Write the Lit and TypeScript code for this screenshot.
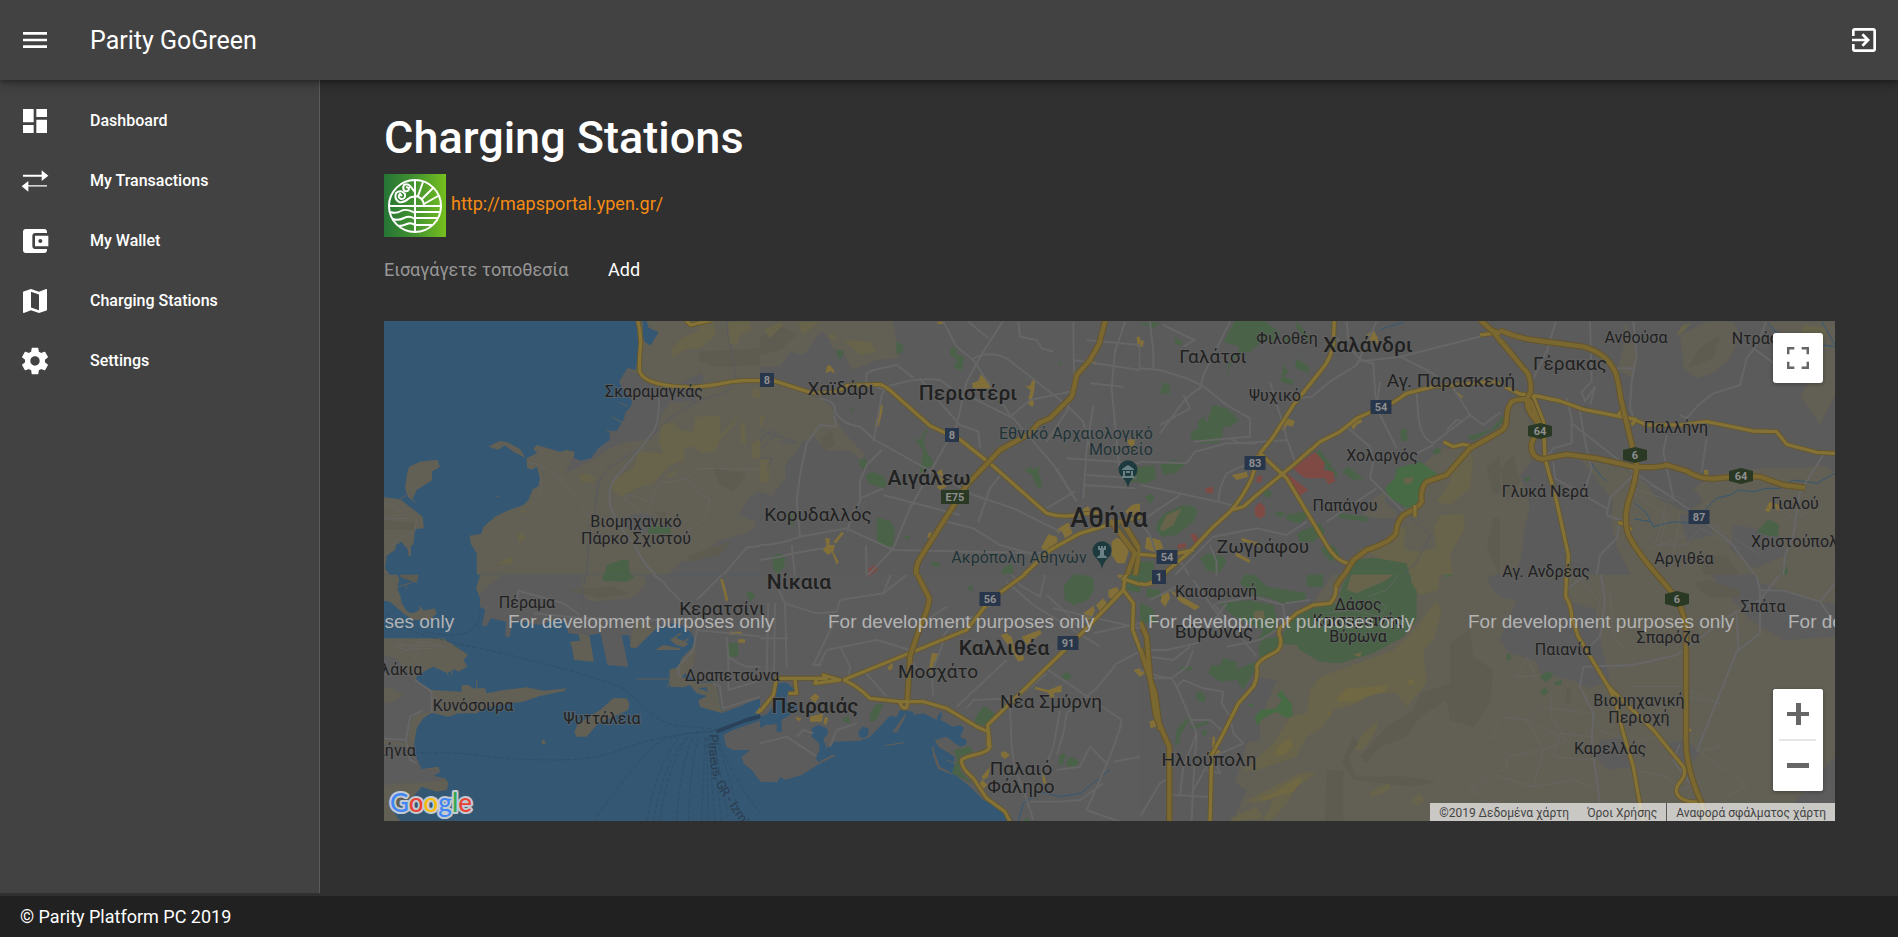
import { LitElement, html, svg, css } from "lit";
import { customElement, property } from "lit/decorators.js";

type Shape = [kind: string, d: string];

interface Sheet {
  x: number;
  y: number;
  areas: Shape[];
  lines: Shape[];
}

/* Map sheets. Every sheet has its own origin and is drawn at a third of its own units. */
const SHEETS: Sheet[] = [
  {
    x: 380,
    y: 315,
    areas: [
      ["land", "M0 0H1145V790H0Z"],
      ["urban", "M740 160L780 182L850 215L905 205L965 172L972 190L945 235L950 260L870 262L845 300L830 350L800 376L740 380L690 400L645 430L555 476L580 425L640 395Z"],
      ["urban", "M1145 525L1105 550L1075 600L1130 620L1110 650L1010 680L960 735L905 740L850 790H1145Z"],
      ["urban", "M720 610L780 595L815 600L820 650L760 655Z"],
      ["olive", "M1000 18L1008 60L960 100L910 105L880 130L872 105L905 70L950 50L965 18ZM1045 20L1110 18L1112 50L1080 60L1070 90L1045 85Z"],
      ["olive", "M845 330L880 322L900 345L940 350L945 305L1020 303L1022 360L1045 335L1075 298L1060 330L1020 375L1005 410L965 415L940 395L912 400L915 436L870 450L820 505L770 520L725 545L700 530L690 500L760 460L775 410L850 415L835 380ZM1120 215L1145 225V255L1115 245ZM1080 320L1096 330L1098 390L1085 385Z"],
      ["olive", "M595 485L615 475L648 485L640 502L605 500ZM410 660L430 652L438 668L418 685ZM350 748L390 725L405 735L390 748ZM420 585L445 585L425 597ZM860 480L893 462L890 475L865 490ZM1115 385L1145 370V430L1115 430Z"],
      ["shade", "M955 110L1145 100V150L1010 155L960 140ZM1000 460L1060 470L1100 475L1060 530L1020 510ZM930 720L1050 680L1020 720L920 740ZM820 590L860 590L850 615Z"],
      ["park", "M805 633L872 633V656H805ZM668 790L680 752L720 735L745 735L752 790Z"],
      ["water", "M0 0H768L775 90L768 165L742 159L718 200L724 215L757 258L752 275L735 295L733 310L712 345L688 352L690 375L655 400L633 430L600 437L583 430L583 410L560 405L540 410L470 390L460 402L472 414L440 430L441 458L456 464L470 455L480 490L474 515L458 522L445 556L430 570L380 588L345 605L310 636L304 656L268 662L274 690L290 715L291 790H0Z"],
      ["water", "M788 18H800L806 38L836 52L812 91L795 82L789 65Z"],
      ["land", "M75 520L82 470L88 455L120 440L172 434L180 455L155 470L157 495L110 525L98 552L113 570L84 545Z"],
      ["land", "M325 395L345 385L360 378L378 380L420 402L436 428L400 410L374 391L355 404Z"],
      ["land", "M0 545L60 553L128 605L132 640L105 642L100 690H93V722H85V706L65 680L48 690L45 705L20 722L15 760L30 780H0Z"],
      ["shade", "M12 615L105 625L100 645H12Z"],
    ],
    lines: [
      ["faint", "M1040 20L1045 70L1060 130L1066 200Q1040 240 990 245L940 265L865 312L820 360L770 408L690 455L655 500L645 590L628 650L620 790"],
      ["thin", "M442 440L485 452L540 490L585 545L630 605M470 545L485 520L480 470M730 560L740 540L770 545L810 562L835 505L875 500L920 490L955 460L1145 463M920 490L960 540L990 550L975 610L920 650M12 565L50 580L82 610L15 612M110 610L105 650L50 675L18 720M728 545L795 605L820 560"],
      ["local", "M837 250Q838 320 820 350Q760 430 705 490Q680 520 692 575Q715 640 765 690Q790 750 830 782M1030 780L1100 698L1140 692"],
      ["landline", "M60 553L80 540M695 305L725 322M718 262L745 275M680 345L700 352M350 544H358"],
      ["major", "M773 15Q786 60 780 110Q777 150 779 170Q790 196 835 206Q880 218 950 216Q1000 212 1055 200Q1090 195 1145 197M917 15L932 30L992 16"],
    ],
  },
  {
    x: 760,
    y: 315,
    areas: [
      ["land", "M0 0H395L407 60L415 130L350 135L275 165L250 110L215 100L205 65L185 50L165 70L150 95L140 110L125 120L90 110L60 155H0Z"],
      ["land", "M0 190L60 210L180 250L215 275L228 310L250 350L315 420L300 432L265 405L200 408L175 385L165 365L130 378L112 405L75 450L78 490L35 542L0 530Z"],
      ["shade", "M0 70L60 30L110 60L60 105L0 120ZM180 370L215 345L225 390L190 405Z"],
      ["olive", "M12 45L60 20L70 30L30 70ZM0 300L15 305L0 340ZM115 40L120 20H180L130 60ZM200 65L225 55L230 80ZM0 430L30 430L25 500L0 505ZM250 75L330 80L350 110L300 120Z"],
      ["park", "M228 115L235 103L252 107L248 125L238 132ZM408 80L430 92L428 112L410 116ZM570 105L578 96L592 100L588 120L613 127L605 165L585 160L580 150L592 140L585 128L570 122ZM890 145L900 138L903 150ZM265 282L283 284L273 291Z"],
      ["park", "M500 338L503 342L490 375L497 405L520 440L515 455L500 458L497 470L478 475L485 440L490 405L462 370L480 376ZM298 435L315 430L322 445L318 465L300 455ZM318 480L335 470L372 482L380 510L370 520L325 505ZM792 465L812 456L822 462L838 455L835 475L845 495V520L830 515L815 480ZM350 605L395 620L405 650L400 690L385 698L352 685L350 660ZM80 595L98 598L100 630L88 632ZM428 665L450 662L445 675ZM38 722L60 715L76 730L72 755L55 780L38 760ZM510 745L520 738L545 750L525 757ZM730 760L755 745L760 775L725 778ZM1105 460L1145 455V500L1110 500ZM1120 740H1145V785H1105Z"],
      ["plaza", "M197 175L200 155L208 149L222 165L223 176L212 168ZM358 272L368 268L367 290L355 335L345 332L352 300ZM636 205L655 198L662 178L672 188L690 200L692 220L640 224ZM797 215L812 210L815 197L826 196L822 230L816 252L822 262L818 275L806 270V248L812 225ZM530 20H550L548 27H535ZM990 135L1012 142L1008 150L990 142ZM1130 65L1140 65V95H1132Z"],
      ["plaza", "M525 475L545 462L552 495L560 515L540 525L530 515L545 505L538 490ZM505 655L515 650L512 670L502 668ZM195 670H210L208 690L225 690L220 710L236 740L230 750L216 712L205 720L188 705L200 690ZM220 682L245 650L252 655L228 685ZM845 695L865 658L890 665L893 680L862 706L845 703ZM888 645L925 622L938 655L915 670L905 648L893 655ZM965 585L985 573L992 590L975 597ZM1055 680L1070 668L1095 680L1110 695L1095 745H1072L1055 720ZM1095 590L1115 570L1140 565V600L1105 600ZM1100 375L1125 370L1120 420Z"],
      ["red", "M325 762L348 748L353 765L325 785Z"],
    ],
    lines: [
      ["faint", "M0 372L40 345L50 355L0 405M0 345L110 382L60 380M0 430L35 430L20 460M1110 60Q1060 130 1040 200L1050 300L1050 400M945 20L948 150M960 560L975 380"],
      ["local", "M180 250Q230 260 225 290Q250 330 300 335L345 375L560 495L640 540L760 580L900 650M340 380L350 330L365 240L380 215Q470 185 540 195L600 240L640 250L760 310L820 380L880 450L950 560M318 205L320 175L340 165L410 150L460 188M380 225L320 205M365 405L320 450L300 500L300 560L275 600L262 650"],
      ["local", "M0 690Q60 690 120 665L260 640L400 705L860 714M120 665L110 560L120 480L140 385L180 330L230 335L222 300M550 20L590 95L640 135L750 300M625 20L685 70M728 20L670 110L620 200L590 330L450 580L400 700L320 785M775 20L780 65L830 75L845 100L880 110M640 130Q690 105 740 130L830 200L920 270L970 320L990 400"],
      ["local", "M940 20L942 190L920 290L860 380M980 75L1140 90L1140 165L940 135M990 205L1090 215M1000 270L980 400L970 550M750 305L810 255L930 230M560 620L640 640L720 690L860 730M655 620L690 520L730 470M370 540L600 600M300 550L370 520M480 190L520 240L600 330L655 350L660 400M1095 20L1065 110L1055 220L1080 480M920 430L1140 445M980 480L1130 490M975 510L1125 520M890 460L950 560M860 580L945 530M95 690L105 780M318 690L320 780M0 735L60 725L100 715L190 700"],
      ["major", "M40 197L150 232Q230 240 260 212L360 208Q380 215 400 235L510 332L600 374L690 445L860 595Q910 610 960 598L1020 592M1145 605L1060 625L960 655L870 705L790 780"],
      ["trunk", "M1036 15L1018 85L990 135L950 180Q940 230 935 245L870 310L835 325L810 355L720 405L620 510L480 730Q462 760 472 790M1050 615L1125 715L1100 785M1085 615L1140 705L1125 785"],
    ],
  },
  {
    x: 1140,
    y: 315,
    areas: [
      ["land", "M1145 260L1100 310L1095 345L1040 375L980 400L900 400L850 450L865 490L850 540L790 580L770 610L700 610L670 600L690 560L735 525L735 560L770 590V630L720 690L660 700L640 735V790H1145Z"],
      ["olive", "M940 450L990 400L1000 440L990 520L930 570L890 560L930 500ZM900 600L970 598L975 640L930 720L940 790H820L700 720L680 705L760 680L770 640L800 635L790 700L830 710L890 700L880 640Z"],
      ["shade", "M1140 430L1080 420L1040 460L1060 540L1110 520L1140 560ZM1060 610L1145 620V790H1080L1040 690Z"],
      ["park", "M285 18H375L420 55L405 85L370 75L330 110L300 115L270 150L258 205L265 150L300 95L250 80ZM425 60L462 70L455 85L430 80ZM470 18L515 75L505 80L470 40ZM0 25L60 20L40 40ZM105 70L130 80L120 92L105 85ZM430 150L445 170L430 185L460 195L458 210L422 200ZM470 130L505 155L510 175L465 160ZM70 205L90 205L88 238L60 235Z"],
      ["park", "M212 285L218 270L260 280L297 315L270 335L250 335L245 375L220 385L185 385L150 370L155 350L175 338L172 320L190 308L203 322ZM0 455L45 450L48 490L20 505H0ZM60 450L100 435L140 445L105 475L70 480ZM15 545L35 535L45 550L30 565ZM50 625L75 595L130 570L165 575L172 590L160 620L110 660L65 665L48 645ZM370 520L395 530L390 550L370 540ZM402 595L420 588L435 595L425 608ZM440 600L490 590L510 600L480 625L440 615ZM520 415L540 405L595 480L580 485ZM605 470L625 455L670 490L640 495ZM780 345L800 340L803 375L785 380ZM875 410L895 398L905 405L890 420ZM980 365L1050 345L1088 305L1090 330L1030 360L1000 378Z"],
      ["park", "M180 730L205 715L250 725L260 740L235 775L200 765ZM470 655L540 625L555 650L520 680L480 680ZM540 700L580 690L600 720L570 740ZM590 595L680 605L685 620L600 610ZM0 740L40 738L45 780H0ZM640 735L700 728L800 745L810 790H620Z"],
      ["wood", "M735 520L765 490L770 460L840 440L890 475L880 495L850 510L840 565L800 580L745 545Z"],
      ["olive", "M60 640L80 600L125 580L100 630L65 650ZM790 490L820 485L815 505L795 508Z"],
      ["red", "M458 460L525 410L555 445L550 465L580 470L585 500L565 508L555 490L500 490L485 482ZM440 475L505 525L475 545ZM350 485L365 480L365 500L350 503ZM195 520L218 515L220 535L200 535ZM345 575L360 562L375 575V600L360 612L345 600ZM112 690L135 683L140 695L115 703ZM150 660L165 655L178 675L165 685Z"],
      ["plaza", "M440 310L465 318L458 335L440 330L435 347L425 345ZM630 325L660 308L668 320L650 330L640 345ZM680 60L700 45L712 65L715 85L690 85ZM275 480L320 470L325 485L290 495ZM0 75L12 78L8 95H0ZM20 665L60 675L70 700L40 710L15 700ZM305 668L370 688L360 695L305 678ZM290 712L330 735V745L285 722ZM930 215L970 245L965 250Z"],
    ],
    lines: [
      ["river", "M720 45L745 35L790 22"],
      ["local", "M70 30L130 60L165 75L130 95M270 20L195 170L180 215M0 160L60 165L140 190L185 210L260 270L330 310L330 365L270 370L160 380M0 440L140 445L165 410L260 385L350 385M60 355L130 260L150 240L185 215M130 240L150 280L60 330M30 20L40 110L40 160M0 510L235 560L290 575M235 560L240 520L260 475L380 420M390 200L420 300L440 370L465 440M440 375L300 385L270 370M480 250L515 245L570 200L650 150L710 20M650 140L780 125L1040 60M590 70L640 110Q660 140 700 145L706 240L720 300L770 400"],
      ["local", "M830 235L835 300Q840 370 880 385L990 300L940 220M880 390L830 415M780 125L860 165L900 190M720 200L710 280M620 335L690 395L700 440L690 490L790 590M440 660L350 640L220 665L100 785M0 625L30 660L50 720M500 620L440 660M560 620L710 520M120 540L0 620M210 690L230 740L230 785M110 720L150 785M990 300L1030 330L1110 270L1115 220M920 345L950 315L970 320M620 20L625 80"],
      ["faint", "M0 50L30 20M790 590L870 660L830 740L790 780M460 150L500 80"],
      ["major", "M583 15L580 85Q575 130 540 170L460 270L400 365L360 415L440 490L500 590L560 690Q590 740 625 745M1060 200L880 215L800 235L760 262L650 310L600 350L540 380L460 450L350 540L310 575L275 585M1060 200L1145 235M910 380L940 395L970 388L1000 395M1020 60L1060 55M0 718L50 722M355 420L335 490Q310 545 270 590L215 640L150 710L60 785M110 716L160 705"],
      ["trunk", "M1145 250Q1105 250 1100 290Q1110 330 1080 350L990 400L920 480L860 500Q840 520 845 560Q835 580 790 600Q770 620 768 655Q755 680 680 705L640 735L610 785M1020 15L1060 50L1145 160M1050 45L1100 60L1145 65"],
      ["major", "M825 570L825 605"],
    ],
  },
  {
    x: 1500,
    y: 315,
    areas: [
      ["land", "M15 290L60 262L90 320L95 440L60 480L90 570L75 640L60 740L40 790H0V330Z"],
      ["land", "M240 430L290 440L345 455L405 470L430 500L480 555L560 590L610 560L580 520L640 480L780 460L900 460L960 450L1005 470V790H400L350 700L330 620L340 560L280 480Z"],
      ["land", "M540 60L620 20H700L720 60L690 130L640 175L590 190L550 160ZM375 20L415 120L400 190L350 165L370 100ZM780 20H1005V240L960 330L900 240L930 200L860 60Z"],
      ["urban", "M700 630L830 650L860 720L760 760L690 700ZM540 600L620 590L640 660L560 680Z"],
      ["urban", "M110 480L330 600L350 690L300 760L210 740L170 600Z"],
      ["shade", "M0 460L40 420L60 500L20 560ZM600 100L660 60L640 130L560 160ZM600 730L680 720L720 780H610Z"],
      ["olive", "M530 60L545 30L575 25L540 60ZM910 30L980 40L970 90L900 70Z"],
      ["park", "M72 490L88 484L90 498L78 500ZM770 650L805 612L838 630L832 665L800 660ZM0 305L10 305L8 325L0 325ZM848 757H863V785H848Z"],
      ["plaza", "M795 588L808 560L838 570L835 590L820 570L808 590ZM360 285L375 290L370 305L355 300ZM612 465L625 465V485H612Z"],
    ],
    lines: [
      ["river", "M615 585L650 550L690 540L715 525L760 530L800 520L840 520L880 495L950 505L1005 475M965 20L1005 90M800 20L850 75L1005 95M405 565L440 595L460 635L520 620L580 625M405 612L450 620M270 440L300 480L320 500"],
      ["thin", "M420 500L520 540L560 560M390 530L500 600L480 700M430 650L470 690L560 690L600 640L720 700M450 700L560 660M500 560L470 680M540 600L520 720M830 580L880 610L930 590M520 560L400 520M640 630L780 720"],
      ["faint", "M0 200L40 260M760 90L830 140M870 80L850 150"],
      ["local", "M167 20L140 110L100 190M200 250L215 310L215 385L160 400L130 440M215 325L400 470L570 585L690 680L765 780M270 20L275 200L245 230L255 260L285 215L270 270M410 120L400 20M410 120L395 200L390 280L405 320M350 160H405M240 290L255 380L275 460L250 540M500 360L490 410L520 550M540 300L560 310L600 265L640 235L720 210L740 130L770 90L800 20M620 370L605 470M400 480L330 550L320 600L360 615L350 670L300 720L290 780M970 420L900 530L880 660L855 720L850 780M160 440L165 490L320 580M760 100L870 180"],
      ["major", "M15 215L60 237L110 243L180 258L250 283L400 312L440 330L540 330L620 320L680 332L760 348L830 350L860 388L950 412L1005 415M100 245L130 320L135 430L170 560L205 720L203 790M355 622L375 628L395 645M355 300L370 280M395 330L410 310"],
      ["trunk", "M0 45Q40 65 100 75L250 95Q320 115 345 170Q355 195 362 250L410 450Q410 490 385 560Q370 620 385 660Q410 710 480 790M0 75L70 160Q95 180 92 230Q70 265 95 300L118 330L95 385Q90 430 130 432L200 418L290 430L400 455Q470 460 500 450L560 468Q600 495 650 490L720 483L780 485L850 510L915 518M120 330L92 260Q70 245 35 260Q20 280 20 310Q20 340 0 350"],
    ],
  },
  {
    x: 380,
    y: 570,
    areas: [
      ["water", "M0 -5H1145V790H0Z"],
      ["land", "M296 -5L302 10L288 55L303 90L360 100L560 105L740 95L800 60L870 70L850 -5Z"],
      ["urban", "M420 -5H620L600 60L630 95L760 85L800 40L780 -5H1145V430L1025 430L1008 340L1000 330L960 340L900 300L945 230L935 190L900 175H870L838 165L800 200L768 235L752 232L748 196L725 196L745 290L682 285L662 190L628 196L565 190L560 160L540 145L480 165L400 150L388 202L376 198L378 155L333 145L318 170L306 165L316 120L300 110V70L360 20Z"],
      ["land", "M570 215L600 212L595 190L628 196L642 275L582 270L578 240ZM768 235L750 230L765 150L810 160L830 175Z"],
      ["land", "M870 350L868 300L895 290L915 240L825 240L850 225L900 235L870 210L905 185L938 195L950 220L940 290L905 320L960 340L1005 335L1010 350L1025 430L960 410L955 390L982 378L950 370L930 345L910 352Z"],
      ["water", "M938 195L912 212L925 222L910 232L890 225L910 250L880 255L900 270L935 235L946 215ZM870 160L905 165L935 190L920 215L888 205L905 190L875 182ZM955 355L985 365L978 352ZM1025 430L1090 405L1110 395L1145 385V440H1030Z"],
      ["land", "M0 -5H40L58 25L52 55L62 80L65 100L82 125L100 130L118 120L120 105L130 122L165 115L170 130L150 150L100 150L70 130L30 95L0 90Z"],
      ["land", "M0 205H190L265 255L250 270L262 290L235 305L225 298L200 308L160 290L140 300L110 318L108 335L155 360L245 365V345H265L280 355H315L320 370L370 360L440 352L490 362L560 355L555 362L480 378L430 395L360 405L310 415L290 430L235 430L205 440L155 428L130 445L110 475L100 540L105 565L125 597L175 590L180 605L160 618L195 625L206 640L200 660L170 665L125 650L100 680L40 725L60 752V790H0Z"],
      ["urban", "M0 255L50 265L110 335L155 365V425L105 435L90 460L85 520L0 510V400L40 395L70 375L30 350L0 360ZM0 520L95 530L125 597L175 600L160 618L195 630L120 640L40 640L0 650Z"],
      ["land", "M583 485L595 460L660 420L700 385H740L748 400L745 420L690 445L655 460L620 500H590ZM483 515L490 508L498 518L490 525Z"],
      ["park", "M668 -5H750L762 20L740 35L668 32ZM1045 220H1074V260H1045ZM1098 70L1115 62L1125 80L1110 95Z"],
      ["shade", "M560 60L700 50L750 70L660 85ZM60 0L120 0L110 40L60 20Z"],
      ["plaza", "M1020 25L1030 30L1045 90L1038 95ZM1048 185H1085V195H1048ZM1075 208H1095V218H1075ZM1125 430L1145 405V432Z"],
      ["urban", "M1030 495L1060 480L1145 450V640L1115 600L1090 580L1085 560L1110 540L1060 540L1040 530Z"],
    ],
    lines: [
      ["landline", "M770 327H870L862 352M880 330L870 345M290 330V355M205 318L200 300M215 315V300M55 50L95 38M78 45V55"],
      ["thin", "M40 230L80 240L120 215L180 225L200 240M60 250L100 235L160 235M100 270L130 215M50 225L190 228M60 215L70 240"],
      ["local", "M790 -5L850 35L860 50L900 90L950 140L950 180L1145 200M1050 -10L950 90M460 130L610 145L840 150L930 145M950 180L940 240L895 290V315L905 320M410 100L415 62L550 100L600 135M1040 200L1045 260L1075 280L1100 290L1145 290M1045 260V360L1145 330M1000 340L1020 350L1028 415L1110 390L1140 380M130 420L90 440L78 510L90 570L110 580M155 365V430M105 330L155 365M10 505L80 510"],
      ["faint", "M618 -5L605 110"],
      ["ferry", "M20 130Q60 175 130 195L250 225Q500 275 715 348Q760 375 790 410Q840 460 900 468L1010 478M300 120Q300 200 200 195L130 185M100 550Q250 545 310 558Q400 570 520 570Q640 570 720 540Q850 490 1010 482M640 755Q730 620 830 520Q880 490 1010 484M800 755Q830 580 900 500M820 755Q850 580 920 500M840 755Q860 590 925 500M890 755Q900 590 940 500M925 755Q930 600 955 500M965 755L975 500M985 755L980 500M1005 755L985 500M1025 755L995 500M1045 740L1000 500M1080 755Q1060 650 1005 495M1145 735Q1050 620 1010 490"],
      ["shipping", "M1010 485L1060 465L1100 450L1145 438"],
    ],
  },
  {
    x: 760,
    y: 570,
    areas: [
      ["urban", "M0 -5H1145V790H0Z"],
      ["water", "M0 635L50 637L62 620L75 630L125 615L190 575L230 555L215 555L175 577L165 560L178 545V520L155 500V475L175 465L200 475L205 490L190 508L200 535L225 515L300 512L330 500L390 438L410 440L420 420L460 425L460 435L490 430L530 450L538 428H546L542 450L580 470L600 465L612 475L600 500L620 510L618 525L600 530L560 500L525 510L535 530L585 560L580 610L630 650L670 690L740 725L765 760V790H0Z"],
      ["water", "M60 338H80L105 360L80 375V395L110 405L115 420L80 440L65 450V485H50V462L20 465V435L45 400L50 340ZM295 485L308 470L325 475L325 495L310 505L297 500ZM0 440L30 430L50 445L0 475Z"],
      ["park", "M910 50L935 20L945 -5H970L975 15L1000 25L1003 60L985 90L940 105L915 90ZM330 430L345 405L370 400L350 450L330 455ZM645 445L670 408L705 430L680 470L645 460ZM582 540L630 528L640 545L600 560L600 600L635 640L575 610L592 570ZM905 320L920 305L937 318L920 333ZM895 580L900 555L912 548L917 555L905 590ZM920 570L935 558L957 575L945 592L920 588ZM250 445L265 438L272 460L250 455ZM625 52L638 45V60L625 62ZM790 755L800 742L815 755ZM1100 -5L1145 20V70L1100 60Z"],
      ["plaza", "M972 128L1000 108L1005 122L990 150L970 140ZM1008 105L1030 85L1040 100L1020 125ZM1045 60L1070 50L1080 65L1060 90L1045 80ZM1068 -5H1105V15L1075 25ZM382 292L398 278L398 295L388 303ZM515 250H538L530 270L520 280V310L505 305ZM150 385L165 370L178 380L165 400ZM150 440L190 430L185 455L150 455ZM195 440L205 445L198 465L190 460ZM105 440L125 445L115 455ZM825 350L865 360L905 345L905 365L880 370L885 385L865 380V368L825 358ZM740 190L755 200L765 240L790 255L792 270L775 275L750 235L722 195ZM785 200L840 180L845 190L800 225ZM722 548L735 543L750 555L735 567L725 560ZM665 620L690 590L685 620L670 630ZM655 645L668 630L682 645L670 658ZM845 610L852 612L860 640L850 640ZM1120 300L1140 295V320Z"],
      ["red", "M325 -5H350L345 5L325 22Z"],
      ["urban", "M398 485L440 425L432 450L410 488ZM515 525L520 555L535 595L575 612L560 600L540 590L525 550Z"],
    ],
    lines: [
      ["landline", "M375 527L430 518M520 530L522 560L535 595L575 612M525 512L585 560L585 580L560 570"],
      ["river", "M765 790L790 700L840 665L900 680L960 670L1050 600"],
      ["faint", "M55 270L160 262M460 130L720 30M270 200L330 180L390 185"],
      ["local", "M25 -5L75 100L170 130L230 125L240 90L370 70L440 15M75 100L80 290M25 100L20 310M45 100L42 310M0 205L85 205M370 70L400 -5M230 140L160 285H185M175 290L200 240L350 210L450 240M265 330L270 290L240 230M310 300L380 380M470 300L440 240M520 380L515 310L545 230L555 190L590 150L640 140L700 100M590 410L740 270M740 -5L780 45L840 80L860 -5M740 35L820 105L1020 230M620 415L640 390L770 385L860 310M860 75L920 130L960 180"],
      ["local", "M880 115L1140 175M1140 245L1070 280L1010 355L920 430L910 490L890 555M850 290L1085 450L1080 470M900 420L880 530L845 620M750 410L755 530L765 600L790 660L820 750M1085 460L1050 560L980 720L1080 755M890 600L960 590L990 530L1040 580M810 695H900L960 690L1030 640M0 520L80 500L110 520L170 560M110 500L130 480L160 490M1140 560L1060 575M210 530L230 480L290 460M1140 160L1000 190M560 110L500 150"],
      ["major", "M0 425L40 375L50 325L200 325L190 315L240 330L165 340L170 325M105 330L110 370H85M250 330L620 180L690 90L820 -5M250 330Q290 345 330 385L420 395L490 395L560 415L650 470L685 485V530M420 395Q425 420 440 412L445 390M765 785L735 725L680 685L640 625Q600 590 605 570Q615 560 650 553Q685 545 690 530L683 465L960 195L1090 60L1095 20L1115 -5M1090 60L1120 100L1118 180L1145 250M1085 25L1145 45"],
      ["trunk", "M470 -5L475 20L508 85Q505 120 480 170L450 260L442 390"],
    ],
  },
  {
    x: 1140,
    y: 570,
    areas: [
      ["land", "M590 -5H1145V790H260L320 660L285 640L320 520L360 510V450L410 330L350 320L360 270L430 225L470 150L520 95Z"],
      ["park", "M240 100L330 90L400 105L412 150L400 190L350 220L370 180L300 150L270 130ZM300 40L320 5L345 15L380 50L440 60L500 70L490 95L430 100L390 85L340 75ZM500 -5H550V50H500ZM0 -5H60L50 40H0ZM0 95L40 120L50 160H0ZM355 235L365 210L430 195V225L400 250L360 265ZM205 310L215 285H240L250 265L290 275V300L345 275L345 300L310 360L290 330L240 335ZM120 290L158 290L155 300H118ZM170 370L185 362L197 385L190 398L170 390ZM105 530L110 480L140 445L148 450L120 495L118 520ZM150 470L205 452V460L155 480ZM185 485L195 478L202 490L192 502ZM20 55L60 60L65 85L20 80Z"],
      ["park", "M640 -5H800L830 40L830 150L790 200L700 250L600 280L540 275L480 240L470 225L430 222V190L450 150L490 120L590 100L610 40Z"],
      ["wood", "M345 440L360 420L410 415L425 390L410 375L425 360L440 385L455 400L460 445L430 440L410 425L370 445L350 468ZM320 405L340 400L338 410ZM910 10L920 5L940 15L920 22ZM1100 255H1112V268H1100Z"],
      ["olive", "M640 -5H780L740 30L650 70L620 60ZM340 125L370 120L375 145L345 150ZM810 -5H900L895 60L840 75L815 40ZM890 90L905 130L880 210L850 240L860 340L800 410L770 370L700 370L640 405L580 420L550 470L500 500L470 560L350 600L310 600L400 520L450 440L500 430L510 360L540 320L640 285L760 240L830 170L860 130Z"],
      ["olive", "M715 450L710 480L670 540H640L670 490ZM320 690L400 650L480 610L530 605L490 640L390 690L340 700ZM270 745L350 710L370 745L280 755ZM690 665L745 638L755 655L720 675L690 680ZM810 690L840 670L855 690L830 708ZM370 750L400 690L470 650L440 700L390 755Z"],
      ["gold", "M590 385L620 355L700 350L745 345L735 365L680 380L650 395H595ZM800 325L820 330L825 340L805 348ZM410 530L450 500L460 530L430 555L405 555ZM400 670L470 625L490 625L460 665L380 690L350 685ZM640 255L665 245L660 260ZM560 425L575 430L565 440Z"],
      ["shade", "M930 220L990 180L1000 260L1060 300L1050 400L1000 470L930 450L920 390L840 440L800 500L720 530L680 580L660 560L740 470L820 420L840 370L930 340ZM640 500L655 520L625 560L650 620L800 620L890 635L820 650L640 630L605 580ZM560 600H610V755H555Z"],
      ["urban", "M1040 20L1145 0V120L1100 90L1060 60Z"],
      ["plaza", "M65 75L85 65L90 85L75 110L62 95ZM90 60L180 110L165 120L120 95ZM0 295L15 310L0 320ZM28 455L45 448L48 470L32 475ZM217 500H225V535H217ZM200 545L240 540L240 555H200Z"],
    ],
    lines: [
      ["thin", "M680 80L740 60L780 10M560 130L640 120L720 140L740 110L700 85M1055 500L1090 437L1145 465M1055 500L1145 520M990 655L1060 615L1145 630M990 655L1050 700L1145 680M1145 540L1095 580L1145 590M1145 290L1130 320"],
      ["local", "M25 240H80L170 220L260 100M25 260L100 270L150 230M0 300L60 320L95 325L110 350L170 490L160 640L155 755M35 325L95 325M95 325L140 290L160 240M110 350L130 330L190 355L250 365L245 400L270 440L280 490L310 520L220 560L240 610L200 600M220 100L350 260M230 100L340 80L430 105L435 150M435 100L510 90M260 230L360 210L410 180M160 30L260 170M30 90L110 50M150 450H210L245 480M0 740L60 640L85 625M100 675L205 680M120 680L130 590L170 490M155 670L205 580"],
      ["faint", "M0 560L40 562"],
      ["major", "M100 -5L85 5L50 30Q20 50 0 40M210 760L215 555L245 500L295 400L340 350Q355 320 350 290Q355 270 400 250Q430 235 420 200Q410 180 430 165L470 130L520 105L570 100Q590 80 588 50L615 0L615 -5"],
      ["trunk", "M0 155L20 200L30 320L48 440L88 530V760M0 235L25 310L45 370L60 480M588 50Q600 25 630 -5"],
    ],
  },
  {
    x: 1500,
    y: 570,
    areas: [
      ["land", "M0 -5H1010V790H0Z"],
      ["urban", "M0 0H60L90 20L200 25L195 90L290 120L300 210L330 330L270 355L215 330L120 310L105 270L30 250L0 210L50 90L0 80ZM620 0L760 -5L780 40L850 60L970 100L1005 100V200L850 210L750 150ZM300 510L380 500L390 590L320 600L290 560ZM880 700L1005 560V700ZM500 520L560 510L600 550L560 590Z"],
      ["shade", "M580 40L620 30L720 60V85L620 80ZM200 355L212 355V400L198 395Z"],
      ["park", "M120 320L140 305L160 308L155 325L135 335ZM165 335L185 330V345H163ZM120 365L135 353L147 365L130 378ZM20 252H31V270H20ZM848 0H863V15H848Z"],
      ["plaza", "M565 472L576 480L568 488Z"],
    ],
    lines: [
      ["thin", "M0 440L80 450L130 540L20 560V600L0 600M50 320L80 260L110 320H45M150 360L155 440L200 510L80 450L120 410L270 430M200 510L130 540L100 650M0 620L100 650L220 630L280 650M270 500L180 490L160 560L280 570M400 520L300 480L280 430L330 400M390 350L540 350L660 400L560 380M390 520L460 500L540 560M400 600L500 620L540 660L600 640M590 540L740 645L680 680M620 500L660 530L590 545M220 0L300 100L290 140M330 60L340 200L410 280L350 290"],
      ["local", "M200 60L260 10M300 0L315 90L300 200L270 230M250 290L400 285L530 255L700 130L780 90L850 0M250 290L240 350L280 430L275 520L300 700M780 60L850 62L960 95L1005 40M765 0L780 60V190L710 245L660 370L590 545M710 130L715 240M960 95L1005 160M540 520L520 570L570 640"],
      ["major", "M200 0L197 80Q215 110 215 140L235 200L325 350L345 390L370 490L400 590L435 790M325 350L460 480L550 590Q560 610 545 630Q525 650 530 670Q545 700 600 695"],
      ["trunk", "M455 -5L510 60Q550 110 558 170V500Q555 590 605 700L620 755"],
    ],
  },
];

/* text, centre x, baseline, style */
const LABELS: [string, number, number, string][] = [
  ["Σκαραμαγκάς", 654, 397, "s"], ["Βιομηχανικό", 636, 527, "s"], ["Πάρκο Σχιστού", 636, 544, "s"],
  ["Χαϊδάρι", 841, 395, "m"], ["Περιστέρι", 968, 400, "l"], ["Αιγάλεω", 929, 485, "l"],
  ["Κορυδαλλός", 818, 521, "m"], ["Αθήνα", 1109, 527, "xl"],
  ["Εθνικό Αρχαιολογικό", 1076, 439, "poi"], ["Μουσείο", 1121, 455, "poi"], ["Ακρόπολη Αθηνών", 1019, 563, "poi"],
  ["Φιλοθέη", 1287, 344, "s"], ["Χαλάνδρι", 1368, 352, "l"], ["Γαλάτσι", 1213, 363, "m"],
  ["Ψυχικό", 1275, 401, "s"], ["Αγ. Παρασκευή", 1451, 387, "m"], ["Χολαργός", 1382, 461, "s"],
  ["Παπάγου", 1345, 511, "s"], ["Ζωγράφου", 1263, 553, "m"], ["Ανθούσα", 1636, 343, "s"],
  ["Ντράφι", 1759, 344, "s"], ["Γέρακας", 1570, 370, "m"], ["Παλλήνη", 1676, 433, "s"],
  ["Γλυκά Νερά", 1545, 497, "s"], ["Γιαλού", 1795, 509, "s"], ["Χριστούπολη", 1799, 547, "s"],
  ["Αργιθέα", 1684, 564, "s"], ["Αγ. Ανδρέας", 1546, 577, "s"], ["Πέραμα", 527, 608, "s"],
  ["Κερατσίνι", 722, 615, "m"], ["Αμπελάκια", 383, 675, "s"], ["Κυνόσουρα", 473, 711, "s"],
  ["Ψυττάλεια", 602, 724, "s"], ["Σελήνια", 387, 756, "s"], ["Δραπετσώνα", 732, 681, "s"],
  ["Νίκαια", 799, 589, "l"], ["Μοσχάτο", 938, 678, "m"], ["Καλλιθέα", 1004, 655, "l"],
  ["Πειραιάς", 815, 713, "l"], ["Νέα Σμύρνη", 1051, 708, "m"], ["Παλαιό", 1021, 775, "m"],
  ["Φάληρο", 1021, 793, "m"], ["Καισαριανή", 1216, 597, "s"], ["Βύρωνας", 1214, 638, "m"],
  ["Δάσος", 1358, 610, "s"], ["Καισαριανής", 1358, 626, "s"], ["Βύρωνα", 1358, 642, "s"],
  ["Ηλιούπολη", 1209, 766, "m"], ["Σπάτα", 1763, 612, "s"], ["Σπαρόζα", 1668, 643, "s"],
  ["Παιανία", 1563, 655, "s"], ["Βιομηχανική", 1639, 706, "s"], ["Περιοχή", 1639, 723, "s"],
  ["Καρελλάς", 1610, 754, "s"],
];

/* number, centre x, centre y, sign shape */
const SHIELDS: [string, number, number, "blue" | "green" | "hex"][] = [
  ["8", 767, 380, "blue"], ["8", 952, 435, "blue"], ["E75", 955, 497, "green"],
  ["54", 1381, 407, "blue"], ["83", 1255, 463, "blue"], ["54", 1167, 557, "blue"],
  ["1", 1159, 577, "blue"], ["56", 990, 599, "blue"], ["91", 1068, 643, "blue"],
  ["64", 1540, 431, "hex"], ["6", 1635, 455, "hex"], ["64", 1741, 476, "hex"],
  ["87", 1699, 517, "blue"], ["6", 1677, 599, "hex"],
];

const WATERMARKS = [188, 508, 828, 1148, 1468, 1788];

const ICONS: Record<string, string> = {
  menu: "M3 18h18v-2H3v2zm0-5h18v-2H3v2zm0-7v2h18V6H3z",
  exit: "M10.09 15.59L11.5 17l5-5-5-5-1.41 1.41L12.67 11H3v2h9.67l-2.58 2.59zM19 3H5c-1.11 0-2 .9-2 2v4h2V5h14v14H5v-4H3v4c0 1.1.89 2 2 2h14c1.1 0 2-.9 2-2V5c0-1.1-.9-2-2-2z",
  dashboard: "M3 13h8V3H3v10zm0 8h8v-6H3v6zm10 0h8V11h-8v10zm0-18v6h8V3h-8z",
  transfer: "M3 7.300h14V4l5 4-5 4V8.900H3V7.300zm18 8.900H7V20l-5-4 5-4v3.100h14v1.600z",
  wallet: "M21 18v1c0 1.100-.9 2-2 2H5c-1.110 0-2-.9-2-2V5c0-1.100.89-2 2-2h14c1.100 0 2 .9 2 2v1h-9c-1.110 0-2 .9-2 2v8c0 1.100.89 2 2 2h9zm-9-2h10V8H12v8zm4-2.500c-.83 0-1.500-.67-1.500-1.500s.67-1.500 1.500-1.500 1.500.67 1.500 1.500-.67 1.500-1.500 1.500z",
  map: "M20.5 3l-.16.03L15 5.1 9 3 3.36 4.9c-.21.07-.36.25-.36.48V20.5c0 .28.22.5.5.5l.16-.03L9 18.9l6 2.1 5.64-1.9c.21-.07.36-.25.36-.48V3.5c0-.28-.22-.5-.5-.5zM15 19l-6-2.11V5l6 2.11V19z",
  settings: "M19.43 12.98c.04-.32.07-.64.07-.98s-.03-.66-.07-.98l2.11-1.65c.19-.15.24-.42.12-.64l-2-3.46c-.12-.22-.39-.3-.61-.22l-2.49 1c-.52-.4-1.08-.73-1.69-.98l-.38-2.65C14.46 2.18 14.25 2 14 2h-4c-.25 0-.46.18-.49.42l-.38 2.65c-.61.25-1.17.59-1.69.98l-2.49-1c-.23-.09-.49 0-.61.22l-2 3.46c-.13.22-.07.49.12.64l2.11 1.65c-.04.32-.07.65-.07.98s.03.66.07.98l-2.11 1.65c-.19.15-.24.42-.12.64l2 3.46c.12.22.39.3.61.22l2.49-1c.52.4 1.08.73 1.69.98l.38 2.65c.03.24.24.42.49.42h4c.25 0 .46-.18.49-.42l.38-2.65c.61-.25 1.17-.59 1.69-.98l2.49 1c.23.09.49 0 .61-.22l2-3.46c.12-.22.07-.49-.12-.64l-2.11-1.65zM12 15.5c-1.93 0-3.5-1.57-3.5-3.5s1.57-3.5 3.5-3.5 3.5 1.57 3.5 3.5-1.57 3.5-3.5 3.5z",
};

@customElement("md-icon")
export class MdIcon extends LitElement {
  @property() name = "menu";
  static styles = css`
    :host { display: inline-flex; }
    svg { width: 32px; height: 32px; fill: #fff; }
  `;
  render() {
    return html`<svg viewBox="0 0 24 24" aria-hidden="true">
      <path d=${ICONS[this.name]}></path>
    </svg>`;
  }
}

@customElement("station-map")
export class StationMap extends LitElement {
  static styles = css`
    :host { display: block; position: relative; height: 500px; overflow: hidden; background: #5b5b5b; }
    .canvas { display: block; width: 100%; height: 100%; font-family: Roboto, "Noto Sans", sans-serif; }
    .canvas path { fill: none; stroke-linejoin: round; }
    .canvas .water { fill: #345874; }
    .canvas .land { fill: #625f55; }
    .canvas .urban { fill: #5c5c5c; }
    .canvas .shade { fill: #5e5b51; }
    .canvas .olive { fill: #67644b; }
    .canvas .gold { fill: #706842; }
    .canvas .park { fill: #4a6348; }
    .canvas .wood { fill: #466b45; }
    .canvas .red { fill: #7f4a44; }
    .canvas .plaza { fill: #837038; }
    .canvas .thin { stroke: #686866; stroke-width: 2; }
    .canvas .faint { stroke: #575a60; stroke-width: 3; }
    .canvas .local { stroke: #666; stroke-width: 6; }
    .canvas .landline { stroke: #625f55; stroke-width: 3; }
    .canvas .river { stroke: #345874; stroke-width: 3; }
    .canvas .ferry { stroke: #2d4a63; stroke-width: 2; stroke-dasharray: 14 6; }
    .canvas .shipping { stroke: #29425a; stroke-width: 12; }
    .canvas .major-edge { stroke: #65562b; stroke-width: 15; }
    .canvas .major { stroke: #837136; stroke-width: 10; }
    .canvas .trunk-edge { stroke: #65542b; stroke-width: 19; }
    .canvas .trunk { stroke: #7a6830; stroke-width: 13; }
    .label { fill: #212121; text-anchor: middle; stroke: #646464; stroke-width: 2px; stroke-opacity: .6; paint-order: stroke; }
    .s { font-size: 16px; }
    .m { font-size: 19px; }
    .l { font-size: 21px; font-weight: 500; }
    .xl { font-size: 27px; font-weight: 500; }
    .poi { font-size: 16px; fill: #1f3337; }
    .route { font-size: 13px; fill: #2b3d4f; }
    .sign { font-size: 11px; font-weight: 700; fill: #8f8f8f; text-anchor: middle; }
    .blue { fill: #28364b; }
    .green, .hex { fill: #2a3924; }
    .canvas .pin { fill: #1d3a3e; }
    .canvas .glyph { fill: #6b8084; }
    .mark { font: 19px "Liberation Sans", Arial, sans-serif; fill: #b3b3b3; }
    .logo { font: 500 26px Lato, sans-serif; stroke: #c3cbd2; stroke-width: 4px; stroke-linejoin: round; paint-order: stroke; }
    .g-blue { fill: #4285f4; } .g-red { fill: #ea4335; } .g-yellow { fill: #fbbc05; } .g-green { fill: #34a853; }
    button { border: 0; background: #fff; padding: 0; width: 50px; display: grid; place-items: center; cursor: pointer; }
    button svg { width: 22px; height: 22px; fill: #666; }
    .full { position: absolute; top: 12px; right: 12px; height: 50px; border-radius: 3px; box-shadow: 0 1px 4px rgba(0, 0, 0, .3); }
    .zoom { position: absolute; right: 12px; bottom: 30px; background: #fff; border-radius: 3px; box-shadow: 0 1px 4px rgba(0, 0, 0, .3); overflow: hidden; }
    .zoom button { height: 50px; }
    .rule { height: 2px; margin: 0 7px 0 6px; background: #e6e6e6; }
    .legal { position: absolute; right: 0; bottom: 0; display: flex; height: 18px; font: 12px/20px Roboto, "Noto Sans", sans-serif; color: #444; background: rgba(245, 245, 245, .7); white-space: nowrap; }
    .legal > * { padding: 0 9px; color: inherit; text-decoration: none; }
    .legal .report { border-left: 1px solid #555; }
  `;

  private lines([kind, d]: Shape) {
    return kind === "major" || kind === "trunk"
      ? svg`<path class=${kind + "-edge"} d=${d}></path><path class=${kind} d=${d}></path>`
      : svg`<path class=${kind} d=${d}></path>`;
  }

  private shield([text, x, y, kind]: (typeof SHIELDS)[number]) {
    const w = kind === "hex" ? 24 : text.length * 7 + 7;
    const plate = kind === "hex"
      ? svg`<polygon class="hex" points="${x - 12},${y - 5} ${x},${y - 8} ${x + 12},${y - 5} ${x + 12},${y + 5} ${x},${y + 8} ${x - 12},${y + 5}"></polygon>`
      : svg`<rect class=${kind} x=${x - w / 2} y=${y - 7} width=${w} height="14"></rect>`;
    return svg`${plate}<text class="sign" x=${x} y=${y + 4}>${text}</text>`;
  }

  render() {
    const place = (s: Sheet) => `translate(${s.x} ${s.y}) scale(.33333)`;
    return html`
      <svg class="canvas" viewBox="384 321 1451 500" preserveAspectRatio="xMinYMid slice" role="img" aria-label="Αθήνα">
        ${SHEETS.map((s, i) => svg`<clipPath id=${"sheet" + i}><rect x="0" y=${s.y === 570 ? 14 : 0} width=${s.x === 1140 ? 1081 : 1141} height="781"></rect></clipPath>
          <g transform=${place(s)}><g clip-path=${`url(#sheet${i})`}>${s.areas.map(([k, d]) => svg`<path class=${k} d=${d}></path>`)}</g></g>`)}
        ${SHEETS.map((s, i) => svg`<g transform=${place(s)}><g clip-path=${`url(#sheet${i})`}>${s.lines.map((l) => this.lines(l))}</g></g>`)}
        <path id="lane" d="M709 734Q708 775 722 795Q735 815 752 840"></path>
        <text class="route"><textPath href="#lane">Piraeus, GR - Izmir</textPath></text>
        ${LABELS.map(([t, x, y, c]) => svg`<text class=${"label " + c} x=${x} y=${y}>${t}</text>`)}
        ${SHIELDS.map((s) => this.shield(s))}
        <g transform="translate(1128 473)">
          <path class="pin" d="M0 15Q-1 9-6 4A9.500 9.500 0 1 1 6 4Q1 9 0 15Z"></path>
          <path class="glyph" d="M-6-4L0-8L6-4V-3H-6ZM-5-2H-3V3H-5ZM3-2H5V3H3ZM-6 3H6V5H-6ZM-2-2H2V0H-2Z"></path>
        </g>
        <g transform="translate(1102 554)">
          <path class="pin" d="M0 15Q-1 9-6 4A9.500 9.500 0 1 1 6 4Q1 9 0 15Z"></path>
          <path class="glyph" d="M-4-8H-2V-6H-1V-8H1V-6H2V-8H4V-4H2V1L5 3V4H-5V3L-2 1V-4H-4Z"></path>
        </g>
        ${WATERMARKS.map((x) => svg`<text class="mark" x=${x} y="628">For development purposes only</text>`)}
        <text class="logo" x="390" y="812"><tspan class="g-blue">G</tspan><tspan class="g-red">o</tspan><tspan class="g-yellow">o</tspan><tspan class="g-blue">g</tspan><tspan class="g-green">l</tspan><tspan class="g-red">e</tspan></text>
      </svg>
      <button class="full" aria-label="Toggle fullscreen view">
        <svg viewBox="0 0 18 18"><path d="M0 0v6h2V2h4V0H0zm16 0h-4v2h4v4h2V0h-2zm0 16h-4v2h6v-6h-2v4zM2 12H0v6h6v-2H2v-4z"></path></svg>
      </button>
      <div class="zoom">
        <button aria-label="Zoom in"><svg viewBox="0 0 22 22"><path d="M9 0h5v9h8v4h-8v9H9v-9H0V9h9z"></path></svg></button>
        <div class="rule"></div>
        <button aria-label="Zoom out"><svg viewBox="0 0 22 22"><path d="M0 8h22v5H0z"></path></svg></button>
      </div>
      <div class="legal">
        <span>©2019 Δεδομένα χάρτη</span>
        <a href="#terms">Όροι Χρήσης</a>
        <a class="report" href="#report">Αναφορά σφάλματος χάρτη</a>
      </div>
    `;
  }
}

const NAV = [
  ["dashboard", "Dashboard"],
  ["transfer", "My Transactions"],
  ["wallet", "My Wallet"],
  ["map", "Charging Stations"],
  ["settings", "Settings"],
];

@customElement("app-root")
export class AppRoot extends LitElement {
  static styles = css`
    :host { display: flex; flex-direction: column; min-height: 100vh; background: #303030; color: #fff; font: 18px/24px Roboto, "Noto Sans", sans-serif; }
    header { position: relative; display: flex; align-items: center; height: 80px; padding: 0 18px 0 19px; background: #424242; box-shadow: 0 2px 5px rgba(0, 0, 0, .3), 0 4px 12px rgba(0, 0, 0, .2); }
    header button { display: flex; border: 0; padding: 0; background: none; cursor: pointer; }
    .brand { flex: 1; margin-left: 39px; padding-top: 2px; font-size: 25px; line-height: 32px; }
    .body { flex: 1; display: flex; padding-bottom: 3px; }
    nav { box-sizing: border-box; width: 320px; padding-top: 11px; background: #424242; border-right: 1px solid #5b5b5b; }
    .item { display: flex; align-items: center; gap: 39px; height: 60px; padding: 0 19px; color: #fff; font-size: 16px; font-weight: 500; text-decoration: none; }
    .item md-icon { width: 32px; }
    main { flex: 1; min-width: 0; padding: 31px 63px 64px 64px; }
    h1 { margin: 0 0 9px; font-size: 45px; line-height: 54px; font-weight: 500; }
    .source { display: flex; align-items: center; gap: 5px; }
    .source a { padding-bottom: 4px; color: #f68b14; text-decoration: none; }
    .emblem { width: 62px; height: 63px; }
    .emblem path, .emblem circle { fill: none; stroke: #fff; stroke-width: 2; }
    form { display: flex; gap: 24px; margin: 21px 0 39px; }
    input, form button { height: 24px; border: 0; padding: 0; background: none; color: #fff; font: inherit; }
    input { width: 200px; outline: 0; }
    input::placeholder { color: #979797; opacity: 1; }
    footer { height: 41px; line-height: 42px; padding: 0 20px; background: #212121; }
  `;

  render() {
    return html`
      <header>
        <button aria-label="Menu"><md-icon name="menu"></md-icon></button>
        <span class="brand">Parity GoGreen</span>
        <button aria-label="Log out"><md-icon name="exit"></md-icon></button>
      </header>
      <div class="body">
        <nav>${NAV.map(([icon, label]) => html`<a class="item" href="#${icon}"><md-icon name=${icon}></md-icon>${label}</a>`)}</nav>
        <main>
          <h1>Charging Stations</h1>
          <div class="source">
            <svg class="emblem" viewBox="0 0 62 63" aria-hidden="true">
              <defs><linearGradient id="leaf"><stop offset="0" stop-color="#257436"></stop><stop offset=".5" stop-color="#43932f"></stop><stop offset="1" stop-color="#76bf1f"></stop></linearGradient></defs>
              <rect width="62" height="63" fill="url(#leaf)"></rect>
              <circle cx="31" cy="32" r="26"></circle>
              <path d="M31 6V58M5 32H57M31 38H56M31 44H54M31 51H49M34 22L39 8M37 26L49 14M40 30L54 22M31 22Q39 23 40 31M6 38Q12 40 17 37T31 39M9 45Q14 47 20 44T31 45M14 52Q19 52 23 50T31 51"></path>
              <path d="M31 23Q27 22 24 25Q20 29 15 28Q10 25 12 19Q17 15 21 20Q22 25 17 25Q13 23 16 20L18 22M31 18Q29 16 27 13Q24 9 20 11Q18 15 21 17Q25 18 25 14L22 13"></path>
            </svg>
            <a href="http://mapsportal.ypen.gr/">http://mapsportal.ypen.gr/</a>
          </div>
          <form @submit=${(e: Event) => e.preventDefault()}>
            <input type="text" aria-label="Εισαγάγετε τοποθεσία" placeholder="Εισαγάγετε τοποθεσία" />
            <button type="submit">Add</button>
          </form>
          <station-map></station-map>
        </main>
      </div>
      <footer>© Parity Platform PC 2019</footer>
    `;
  }
}
